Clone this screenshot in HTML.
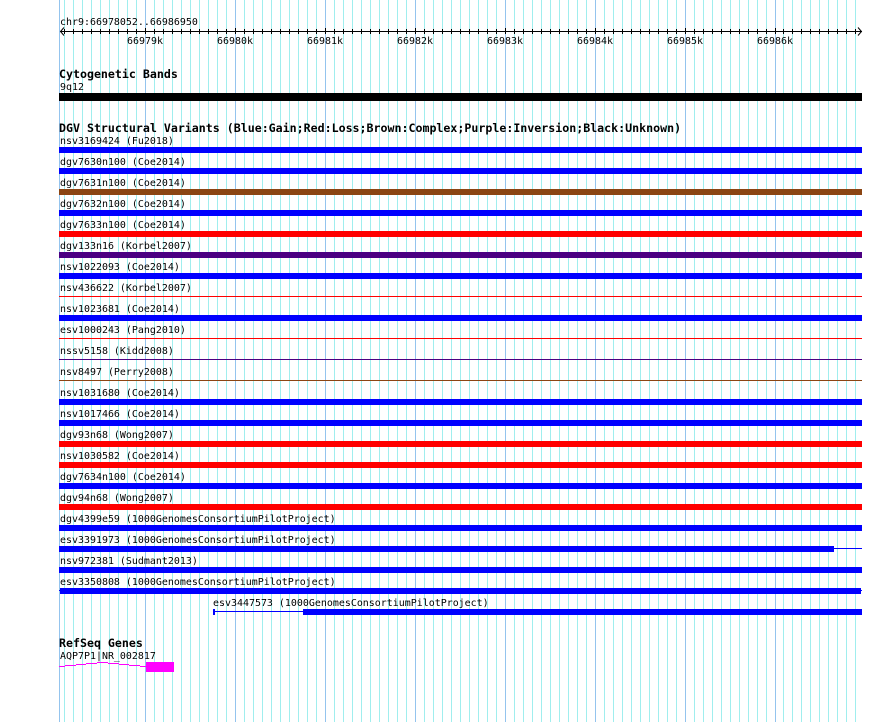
<!DOCTYPE html>
<html>
<head>
<meta charset="utf-8">
<title>chr9:66978052..66986950</title>
<style>
html,body{margin:0;padding:0;background:#fff;width:890px;height:722px;overflow:hidden}
svg{display:block}
text{font-family:"DejaVu Sans Mono","Liberation Mono",monospace;font-size:9.96px;fill:#000;white-space:pre}
text.t{font-size:11.62px;font-weight:bold}
</style>
</head>
<body>
<svg width="890" height="722" viewBox="0 0 890 722" xmlns="http://www.w3.org/2000/svg">
<defs>
<clipPath id="tk"><rect x="0" y="29" width="890" height="5"/></clipPath>
<path id="mn" d="M64.5 0V722M73.5 0V722M82.5 0V722M91.5 0V722M100.5 0V722M109.5 0V722M118.5 0V722M127.5 0V722M136.5 0V722M154.5 0V722M163.5 0V722M172.5 0V722M181.5 0V722M190.5 0V722M199.5 0V722M208.5 0V722M217.5 0V722M226.5 0V722M244.5 0V722M253.5 0V722M262.5 0V722M271.5 0V722M280.5 0V722M289.5 0V722M298.5 0V722M307.5 0V722M316.5 0V722M334.5 0V722M343.5 0V722M352.5 0V722M361.5 0V722M370.5 0V722M379.5 0V722M388.5 0V722M397.5 0V722M406.5 0V722M424.5 0V722M433.5 0V722M442.5 0V722M451.5 0V722M460.5 0V722M469.5 0V722M478.5 0V722M487.5 0V722M496.5 0V722M514.5 0V722M523.5 0V722M532.5 0V722M541.5 0V722M550.5 0V722M559.5 0V722M568.5 0V722M577.5 0V722M586.5 0V722M604.5 0V722M613.5 0V722M622.5 0V722M631.5 0V722M640.5 0V722M649.5 0V722M658.5 0V722M667.5 0V722M676.5 0V722M694.5 0V722M703.5 0V722M712.5 0V722M721.5 0V722M730.5 0V722M739.5 0V722M748.5 0V722M757.5 0V722M766.5 0V722M783.5 0V722M792.5 0V722M801.5 0V722M810.5 0V722M819.5 0V722M828.5 0V722M837.5 0V722M846.5 0V722M855.5 0V722"/>
</defs>
<rect width="890" height="722" fill="#fff"/>
<g shape-rendering="crispEdges" fill="none" stroke-width="1">
<use href="#mn" stroke="#a0eeee"/>
<path stroke="#94c4ee" d="M59.5 0V722M145.5 0V722M235.5 0V722M325.5 0V722M415.5 0V722M505.5 0V722M595.5 0V722M685.5 0V722M775.5 0V722"/>
<!-- ruler -->
<path stroke="#000" d="M60 31.5H862M145.5 28V34M235.5 28V34M325.5 28V34M415.5 28V34M505.5 28V34M595.5 28V34M685.5 28V34M775.5 28V34"/>
<use href="#mn" stroke="#000" clip-path="url(#tk)"/>
</g>
<path d="M64 27.5L60.5 31.5L64 35.5M858 27.5L861.5 31.5L858 35.5" fill="none" stroke="#000" stroke-width="1"/>
<g shape-rendering="crispEdges">
<rect x="59" y="93" width="803" height="8" fill="#000"/>
<g fill="#0000ff">
<rect x="59" y="147" width="803" height="6"/>
<rect x="59" y="168" width="803" height="6"/>
<rect x="59" y="210" width="803" height="6"/>
<rect x="59" y="273" width="803" height="6"/>
<rect x="59" y="315" width="803" height="6"/>
<rect x="59" y="399" width="803" height="6"/>
<rect x="59" y="420" width="803" height="6"/>
<rect x="59" y="483" width="803" height="6"/>
<rect x="59" y="525" width="803" height="6"/>
<rect x="59" y="546" width="775" height="6"/>
<rect x="834" y="548" width="28" height="1"/>
<rect x="59" y="567" width="803" height="6"/>
<rect x="60" y="588" width="801" height="6"/>
<rect x="59" y="590" width="803" height="1"/>
<rect x="213" y="609" width="2" height="6"/>
<rect x="215" y="611" width="88" height="1" fill="#0000ff"/>
<rect x="303" y="609" width="559" height="6"/>
</g>
<g fill="#ff0000">
<rect x="59" y="231" width="803" height="6"/>
<rect x="59" y="296" width="803" height="1"/>
<rect x="59" y="338" width="803" height="1"/>
<rect x="59" y="441" width="803" height="6"/>
<rect x="59" y="462" width="803" height="6"/>
<rect x="59" y="504" width="803" height="6"/>
</g>
<rect x="59" y="189" width="803" height="6" fill="#8b4513"/>
<rect x="59" y="380" width="803" height="1" fill="#8b4513"/>
<rect x="59" y="252" width="803" height="6" fill="#4b0082"/>
<rect x="59" y="359" width="803" height="1" fill="#4b0082"/>
<path d="M59 666.5H65M65 665.5H76M76 664.5H86M86 663.5H97M97 662.5H108M108 663.5H119M119 664.5H129M129 665.5H140M140 666.5H146" fill="none" stroke="#ff00ff"/>
<rect x="146" y="662" width="28" height="10" fill="#ff00ff"/>
</g>

<text x="60" y="25">chr9:66978052..66986950</text>
<text x="127" y="44">66979k</text>
<text x="217" y="44">66980k</text>
<text x="307" y="44">66981k</text>
<text x="397" y="44">66982k</text>
<text x="487" y="44">66983k</text>
<text x="577" y="44">66984k</text>
<text x="667" y="44">66985k</text>
<text x="757" y="44">66986k</text>

<text class="t" x="59" y="78">Cytogenetic Bands</text>
<text x="60" y="90">9q12</text>
<text class="t" x="59" y="132">DGV Structural Variants (Blue:Gain;Red:Loss;Brown:Complex;Purple:Inversion;Black:Unknown)</text>

<text x="60" y="144">nsv3169424 (Fu2018)</text>
<text x="60" y="165">dgv7630n100 (Coe2014)</text>
<text x="60" y="186">dgv7631n100 (Coe2014)</text>
<text x="60" y="207">dgv7632n100 (Coe2014)</text>
<text x="60" y="228">dgv7633n100 (Coe2014)</text>
<text x="60" y="249">dgv133n16 (Korbel2007)</text>
<text x="60" y="270">nsv1022093 (Coe2014)</text>
<text x="60" y="291">nsv436622 (Korbel2007)</text>
<text x="60" y="312">nsv1023681 (Coe2014)</text>
<text x="60" y="333">esv1000243 (Pang2010)</text>
<text x="60" y="354">nssv5158 (Kidd2008)</text>
<text x="60" y="375">nsv8497 (Perry2008)</text>
<text x="60" y="396">nsv1031680 (Coe2014)</text>
<text x="60" y="417">nsv1017466 (Coe2014)</text>
<text x="60" y="438">dgv93n68 (Wong2007)</text>
<text x="60" y="459">nsv1030582 (Coe2014)</text>
<text x="60" y="480">dgv7634n100 (Coe2014)</text>
<text x="60" y="501">dgv94n68 (Wong2007)</text>
<text x="60" y="522">dgv4399e59 (1000GenomesConsortiumPilotProject)</text>
<text x="60" y="543">esv3391973 (1000GenomesConsortiumPilotProject)</text>
<text x="60" y="564">nsv972381 (Sudmant2013)</text>
<text x="60" y="585">esv3350808 (1000GenomesConsortiumPilotProject)</text>
<text x="213" y="606">esv3447573 (1000GenomesConsortiumPilotProject)</text>

<text class="t" x="59" y="647">RefSeq Genes</text>
<text x="60" y="659">AQP7P1|NR_002817</text>
</svg>
</body>
</html>
